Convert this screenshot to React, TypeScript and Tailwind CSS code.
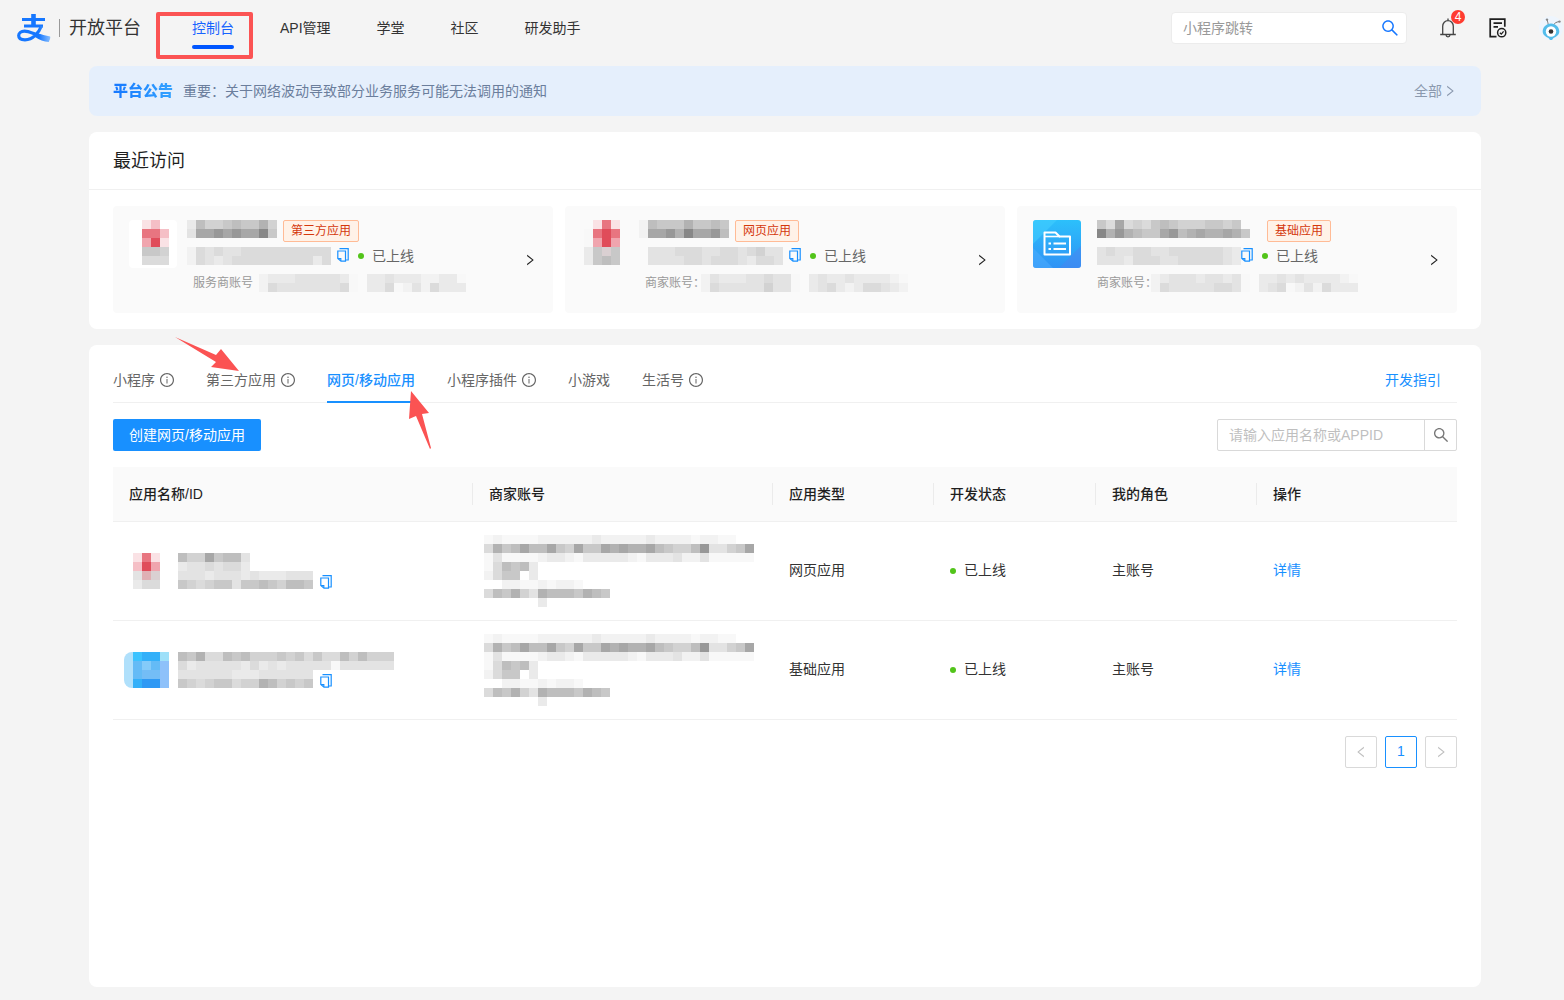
import clsx from "clsx";
import {
  AiOutlineInfoCircle,
  AiOutlineLeft,
  AiOutlineRight,
  AiOutlineSearch,
} from "react-icons/ai";

const CELL = 9;

const TONES: Record<string, string> = {
  "0": "#ffffff",
  "1": "#f8f8f8",
  "2": "#f2f2f2",
  "3": "#eaeaea",
  "4": "#e3e3e3",
  "5": "#dbdbdb",
  "6": "#d2d2d2",
  "7": "#c8c8c8",
  "8": "#bebebe",
  "9": "#b2b2b2",
  a: "#a7a7a7",
  b: "#989898",
  c: "#878787",
  // reds
  R: "#e04c5a",
  r: "#e87580",
  s: "#f0a5ae",
  p: "#f5bfc6",
  q: "#fae2e5",
  o: "#dfb0b4",
  n: "#dad0d2",
  // blues
  B: "#2f99f4",
  C: "#3cc3ff",
  D: "#33b0f9",
  E: "#74bdf6",
  F: "#84cbf9",
  G: "#9ee0f9",
  H: "#64bbf6",
  I: "#8ec1fa",
  J: "#b0e0fb",
};

const RECENT = [
  {
    id: "third",
    tag: "第三方应用",
    account: "服务商账号",
    icon: [".0qp0", ".0rrp", ".0sRq", ".0776", ".0555"],
    iconClass: "bg-white",
    iconShift: "-ml-[5px]",
    nameClass: "w-[90px]",
    shift: "-ml-1.5",
    name: ["3866787796", "4aababaac7"],
    appId: ["2545445555555555", "2543455555555535"],
    owner: ["23334444431.33433322331", "25444444451.33512425333"],
    accountClass: "ml-1.5",
  },
  {
    id: "web",
    tag: "网页应用",
    account: "商家账号：",
    icon: [".qrq", "1rRr", "1sRs", "37n7", "3787"],
    iconClass: "",
    iconShift: "ml-[3px]",
    nameClass: "w-[90px]",
    shift: "-ml-1.5",
    name: ["2877797787", "2aab9caab8"],
    appId: [".444555445545644", ".444455455543554"],
    owner: ["24333445441.34334333321", "25444446441.34532355432"],
    accountClass: "-ml-1",
  },
  {
    id: "base",
    tag: "基础应用",
    account: "商家账号：",
    icon: null,
    iconClass: "",
    iconShift: "",
    nameClass: "w-[170px]",
    shift: "ml-0",
    name: ["75a5657876667767", "c9b9877ab89a99a97"],
    appId: ["4544554455555543", "4443555445555543"],
    owner: ["23444344341.33434333321", "25444445541.34512425333"],
    accountClass: "-ml-1.5",
  },
];

const TABS = [
  { label: "小程序", info: true },
  { label: "第三方应用", info: true },
  { label: "网页/移动应用", info: false, active: true },
  { label: "小程序插件", info: true },
  { label: "小游戏", info: false },
  { label: "生活号", info: true },
];

const MERCHANT = [
  "1211112222223222223222212211",
  "5978a88a76a77a9a99a87668b4467a",
  "141111233213333321333422411111",
  "158783",
  "2577.3",
  "..221121221",
  "58796498887987",
  "......3",
];

const APPS = [
  {
    id: "1",
    icon: [".qrq.", ".pRs.", ".4on.", ".355."],
    name: ["866a7884", "34454553"],
    appId: ["444344434333444", "765677477876887"],
    type: "网页应用",
  },
  {
    id: "2",
    icon: ["JCDDG", "JHFHI", "JHEEI", "JDBBI"],
    name: ["879558786667675755868666", "534444435343444441444444"],
    appId: ["444444333444444", "765677566986767"],
    type: "基础应用",
  },
];

const NAV = ["控制台", "API管理", "学堂", "社区", "研发助手"];

const COLUMNS = ["应用名称/ID", "商家账号", "应用类型", "开发状态", "我的角色", "操作"];

function Mosaic({ rows, className }: { rows: string[]; className?: string }) {
  const cols = Math.max(...rows.map((r) => r.length));
  return (
    <svg
      width={cols * CELL}
      height={rows.length * CELL}
      shapeRendering="crispEdges"
      aria-hidden="true"
      className={clsx("block shrink-0", className)}
    >
      {rows.map((row, y) =>
        row.split("").map((c, x) =>
          TONES[c] ? (
            <rect
              key={`${x}-${y}`}
              x={x * CELL}
              y={y * CELL}
              width={CELL}
              height={CELL}
              fill={TONES[c]}
            />
          ) : null
        )
      )}
    </svg>
  );
}

function Logo() {
  return (
    <svg width="34" height="30" viewBox="0 0 34 30" fill="none" aria-hidden="true">
      <defs>
        <linearGradient id="swoosh" x1="0" y1="0" x2="34" y2="0" gradientUnits="userSpaceOnUse">
          <stop offset="0" stopColor="#1677ff" />
          <stop offset="0.65" stopColor="#1677ff" />
          <stop offset="1" stopColor="#8ec2ff" />
        </linearGradient>
      </defs>
      <path d="M5 6.500h23M7 13h19" stroke="#1677ff" strokeWidth="2.800" />
      <path d="M14.200 1h4.600v12h-4.600z" fill="#1677ff" />
      <path
        d="M24.500 13c-2.600 6.500-8.500 13.800-16.500 13.800-4.200 0-6.300-1.800-6.300-4.300s2.300-4.300 5.800-4.300c6.200 0 12.200 5 25.500 6.800"
        stroke="url(#swoosh)"
        strokeWidth="3.200"
      />
      <path d="M20 21.500c4 1.800 8 2.700 13.500 3L31.800 29c-5-.3-9.300-2-13.800-5z" fill="url(#swoosh)" />
    </svg>
  );
}

function BellIcon() {
  return (
    <svg width="18" height="20" viewBox="0 0 18 20" fill="none" stroke="#444" strokeWidth="1.300" aria-hidden="true">
      <path d="M9 .6v2M3.700 16.200V8.300a5.300 5.700 0 0 1 10.600 0v7.900M1.200 16.500h15.600M7 17c.2 2.400 3.800 2.400 4 0" />
    </svg>
  );
}

function DocIcon() {
  return (
    <svg width="18" height="20" viewBox="0 0 18 20" fill="none" stroke="#1f1f1f" strokeWidth="1.700" aria-hidden="true">
      <path d="M7.500 18.700H1.200V1.200h14.600v7.500M4.500 5.200h8.500M4.500 8.800h4.500" />
      <circle cx="12.700" cy="14.700" r="4.100" strokeWidth="1.500" />
      <path d="m10.900 14.700 1.400 1.400 2.300-2.700" strokeWidth="1.300" />
    </svg>
  );
}

function Avatar() {
  return (
    <svg width="24" height="24" viewBox="0 0 24 24" aria-hidden="true">
      <circle cx="12" cy="12" r="12" fill="#eef5fd" />
      <path d="M9.500 9.500C9 7 8.500 5.500 8.200 4M14.500 9c1-2 3-3 5.500-3.400" stroke="#777" fill="none" />
      <circle cx="8" cy="3.600" r="1.200" fill="#888" />
      <circle cx="20.500" cy="5.600" r="1.200" fill="#888" />
      <path d="M12 7.500c4.800 0 8.300 3.700 8.300 8 0 3.200-3 5.500-5.800 6.500L13 24h-2l-1.500-2c-2.800-1-5.800-3.300-5.800-6.500 0-4.300 3.500-8 8.300-8z" fill="#54bdeb" />
      <circle cx="12" cy="15.500" r="5.200" fill="#fff" />
      <circle cx="12" cy="15.500" r="2.300" fill="#333" />
    </svg>
  );
}

function CopyIcon() {
  return (
    <svg width="13" height="15" viewBox="0 0 13 15" fill="none" stroke="#1890ff" strokeWidth="1.200" aria-hidden="true">
      <path d="M.8 4h7.700v10.200H4L.8 11.500z" />
      <path d="M1 11.500h2.800v2.500M2.500 1.700h8.700v11.300H9" />
    </svg>
  );
}

function FolderIcon() {
  return (
    <svg width="48" height="48" viewBox="0 0 48 48" fill="none" aria-hidden="true">
      <defs>
        <linearGradient id="folder" x1="0" y1="0" x2="0" y2="48" gradientUnits="userSpaceOnUse">
          <stop offset="0" stopColor="#2cc0fb" />
          <stop offset="1" stopColor="#2f92f5" />
        </linearGradient>
      </defs>
      <rect width="48" height="48" rx="3" fill="url(#folder)" />
      <path d="M3 0h21L0 24V3a3 3 0 0 1 3-3z" fill="#45d2ff" fillOpacity="0.500" />
      <path d="M0 28l20 20H3a3 3 0 0 1-3-3z" fill="#4fb0ff" fillOpacity="0.500" />
      <path d="M48 26v19a3 3 0 0 1-3 3H26z" fill="#4a86f0" fillOpacity="0.500" />
      <path d="M11.500 34.500V12.500h11l4 4h10.500v18z" stroke="#fff" strokeWidth="2" strokeLinejoin="round" />
      <path d="M12 16.500h15" stroke="#fff" strokeWidth="1.600" />
      <path d="M15.500 23.500h2.500M20.500 23.500h12.500M15.500 29h2.500M20.500 29h12.500" stroke="#fff" strokeWidth="2" />
    </svg>
  );
}

function Status() {
  return (
    <span className="flex items-center gap-2">
      <span className="size-1.5 rounded-full bg-[#52c41a]" />
      已上线
    </span>
  );
}

function Header() {
  return (
    <header className="flex h-[58px] items-start pl-[17px] pr-px">
      <a href="#" className="flex h-14 items-center text-[18px] text-[#333]">
        <Logo />
        <span className="ml-2 mr-[9px] h-[18px] w-px bg-[#999]" />
        开放平台
      </a>
      <nav className="ml-[51px] flex gap-[46px] text-[14px]">
        {NAV.map((item, i) => (
          <a
            key={item}
            href="#"
            className={clsx(
              "relative flex h-14 items-center whitespace-nowrap",
              i === 0 ? "text-[#1763ff]" : "text-[#333]"
            )}
          >
            {item}
            {i === 0 && (
              <>
                <span className="absolute inset-x-0 top-[45px] h-1 rounded-xs bg-[#0056ff]" />
                <span className="pointer-events-none absolute -left-9 top-3 h-[47px] w-[97px] rounded-xs border-4 border-[#fb5353]" />
              </>
            )}
          </a>
        ))}
      </nav>
      <div className="ml-auto flex h-14 items-center gap-8">
        <form className="flex h-8 w-[236px] items-center rounded border border-[#ececec] bg-white pl-[11px] pr-1.5">
          <input
            aria-label="小程序跳转"
            placeholder="小程序跳转"
            className="min-w-0 flex-1 text-[14px] outline-none placeholder:text-[#999]"
          />
          <button type="button" aria-label="搜索" className="text-[#1677ff]">
            <AiOutlineSearch size={20} />
          </button>
        </form>
        <button type="button" aria-label="消息" className="relative">
          <BellIcon />
          <span className="absolute -right-2 -top-2 flex size-[14px] items-center justify-center rounded-full bg-[#ff3b30] text-[12px] leading-none text-white">
            4
          </span>
        </button>
        <button type="button" aria-label="文档">
          <DocIcon />
        </button>
        <Avatar />
      </div>
    </header>
  );
}

function Notice() {
  return (
    <div className="flex h-[50px] shrink-0 items-center rounded-lg bg-[#e5effc] px-6 text-[14px]">
      <strong className="bg-linear-to-r from-[#1677ff] to-[#36a3ff] bg-clip-text text-[15px] font-black text-transparent">
        平台公告
      </strong>
      <a href="#" className="ml-[10px] text-[#6b7e9c]">
        重要：关于网络波动导致部分业务服务可能无法调用的通知
      </a>
      <a href="#" className="ml-auto flex items-center gap-px text-[#8b99ae]">
        全部
        <AiOutlineRight size={14} />
      </a>
    </div>
  );
}

function RecentVisits() {
  return (
    <section className="shrink-0 rounded-lg bg-white">
      <h2 className="flex h-[58px] items-center border-b border-[#f0f0f0] px-6 pt-0.5 text-[18px] text-[#1f1f1f]">
        最近访问
      </h2>
      <div className="grid grid-cols-3 gap-3 px-6 py-4">
        {RECENT.map((app) => (
          <article key={app.id} className="flex items-center rounded bg-[#fafafa] px-4 pb-[21px] pt-[14px]">
            <div className={clsx("mr-4 size-12 shrink-0 self-start rounded", app.iconClass)}>
              {app.icon ? <Mosaic rows={app.icon} className={app.iconShift} /> : <FolderIcon />}
            </div>
            <div className="min-w-0 flex-1">
              <div className="flex h-[22px] items-start">
                <div className={clsx("shrink-0", app.nameClass)}>
                  <Mosaic rows={app.name} className={app.shift} />
                </div>
                <span className="h-[22px] whitespace-nowrap rounded-xs border border-[#ffbb96] bg-[#fff2e8] px-[7px] text-[12px] leading-5 text-[#d4380d]">
                  {app.tag}
                </span>
              </div>
              <div className="mt-[5px] flex h-[18px] items-center">
                <div className="w-36 shrink-0">
                  <Mosaic rows={app.appId} className={app.shift} />
                </div>
                <button type="button" aria-label="复制" className="mr-2 self-start">
                  <CopyIcon />
                </button>
                <span className="whitespace-nowrap text-[14px] text-[#666]">
                  <Status />
                </span>
              </div>
              <div className="mt-[9px] flex h-[18px] items-center text-[12px] text-[#999]">
                <span className="whitespace-nowrap">{app.account}</span>
                <Mosaic rows={app.owner} className={app.accountClass} />
              </div>
            </div>
            <a href="#" aria-label={app.tag} className="mt-2 text-[#222]">
              <AiOutlineRight size={14} />
            </a>
          </article>
        ))}
      </div>
    </section>
  );
}

function Arrows() {
  return (
    <svg
      width="350"
      height="114"
      viewBox="86 337 350 114"
      fill="#fb5353"
      aria-hidden="true"
      className="pointer-events-none absolute -left-[3px] -top-2"
    >
      <path d="M175 337l41 18 5-6 18 22-28-4 5-5z" />
      <path d="M411 391l18 22-7 1 9 34-1 1-14-33-7 3z" />
    </svg>
  );
}

function AppTable() {
  return (
    <table className="mt-4 w-full table-fixed text-left text-[14px] text-[#333]">
      <colgroup>
        <col className="w-[360px]" />
        <col className="w-[300px]" />
        <col className="w-[161px]" />
        <col className="w-[162px]" />
        <col className="w-[161px]" />
        <col />
      </colgroup>
      <thead>
        <tr className="h-[54px] border-b border-[#f0f0f0] bg-[#fafafa] text-[#1f1f1f]">
          {COLUMNS.map((h) => (
            <th key={h} className="group p-0 font-medium">
              <div className="border-r border-[#ebebeb] pl-4 leading-[22px] group-last:border-r-0">{h}</div>
            </th>
          ))}
        </tr>
      </thead>
      <tbody>
        {APPS.map((app) => (
          <tr key={app.id} className="h-[99px] border-b border-[#f0f0f0]">
            <td className="p-0 pl-[11px]">
              <div className="flex items-center gap-[9px]">
                <Mosaic rows={app.icon} className="rounded-l-lg" />
                <div>
                  <Mosaic rows={app.name} />
                  <div className="flex h-[18px] items-end gap-[7px]">
                    <Mosaic rows={app.appId} />
                    <button type="button" aria-label="复制">
                      <CopyIcon />
                    </button>
                  </div>
                </div>
              </div>
            </td>
            <td className="p-0 pl-[11px]">
              <Mosaic rows={MERCHANT} />
            </td>
            <td className="p-0 pl-4">{app.type}</td>
            <td className="p-0 pl-4">
              <Status />
            </td>
            <td className="p-0 pl-4">主账号</td>
            <td className="p-0 pl-4">
              <a href="#" className="text-[#1890ff]">
                详情
              </a>
            </td>
          </tr>
        ))}
      </tbody>
    </table>
  );
}

function AppList() {
  return (
    <section className="relative flex-1 rounded-lg bg-white px-6 pb-6">
      <div className="flex h-[58px] border-b border-[#f0f0f0] pr-4 pt-3 text-[14px]">
        <div role="tablist" className="flex gap-8">
          {TABS.map((tab) => (
            <button
              key={tab.label}
              type="button"
              role="tab"
              aria-selected={!!tab.active}
              className={clsx(
                "-mb-px flex items-center gap-1 whitespace-nowrap border-y-2 border-t-transparent",
                tab.active
                  ? "border-b-[#1890ff] font-medium text-[#1890ff]"
                  : "border-b-transparent text-[#666]"
              )}
            >
              {tab.label}
              {tab.info && <AiOutlineInfoCircle size={16} className="-mr-px" />}
            </button>
          ))}
        </div>
        <a href="#" className="ml-auto flex items-center pt-px text-[#1890ff]">
          开发指引
        </a>
      </div>

      <div className="mt-4 flex items-center justify-between">
        <button type="button" className="h-8 rounded-xs bg-[#1890ff] px-4 text-[14px] text-white">
          创建网页/移动应用
        </button>
        <form className="flex h-8 w-60 rounded-xs border border-[#d9d9d9]">
          <input
            aria-label="请输入应用名称或APPID"
            placeholder="请输入应用名称或APPID"
            className="min-w-0 flex-1 px-[11px] text-[14px] outline-none placeholder:text-[#bfbfbf]"
          />
          <button
            type="button"
            aria-label="搜索"
            className="flex w-8 items-center justify-center border-l border-[#d9d9d9] text-[#777]"
          >
            <AiOutlineSearch size={18} />
          </button>
        </form>
      </div>

      <AppTable />

      <div className="mt-4 flex justify-end gap-2 text-[14px]">
        <button
          type="button"
          disabled
          aria-label="上一页"
          className="flex size-8 items-center justify-center rounded-xs border border-[#d9d9d9] text-[#bfbfbf]"
        >
          <AiOutlineLeft size={14} />
        </button>
        <button type="button" className="size-8 rounded-xs border border-[#1890ff] font-medium text-[#1890ff]">
          1
        </button>
        <button
          type="button"
          disabled
          aria-label="下一页"
          className="flex size-8 items-center justify-center rounded-xs border border-[#d9d9d9] text-[#bfbfbf]"
        >
          <AiOutlineRight size={14} />
        </button>
      </div>
      <Arrows />
    </section>
  );
}

export default function App() {
  return (
    <div className="flex min-h-screen flex-col bg-[#f4f4f4] font-['Liberation_Sans','Noto_Sans_CJK_SC',sans-serif]">
      <Header />
      <main className="flex flex-1 flex-col gap-4 pb-[13px] pl-[89px] pr-[83px] pt-2">
        <Notice />
        <RecentVisits />
        <AppList />
      </main>
    </div>
  );
}
